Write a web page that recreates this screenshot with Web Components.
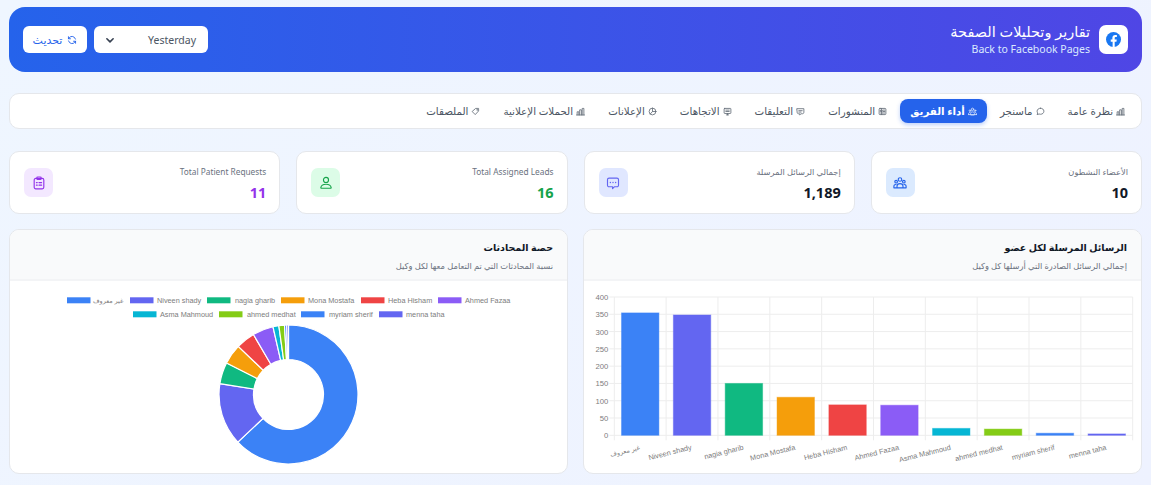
<!DOCTYPE html>
<html lang="ar" dir="rtl">
<head>
<meta charset="utf-8">
<title>تقارير وتحليلات الصفحة</title>
<style>
html,body{margin:0;padding:0}
body{min-height:485px;background:linear-gradient(135deg,#eff6ff,#eef2ff);font-family:"Noto Sans","DejaVu Sans",sans-serif;color:#111827}
report-page{display:block}
</style>
</head>
<body>
<report-page>
  <page-header slot="header" title-text="تقارير وتحليلات الصفحة" sub="Back to Facebook Pages"></page-header>
  <tab-bar>
    <tab-item icon="bars">نظرة عامة</tab-item>
    <tab-item icon="bubble">ماسنجر</tab-item>
    <tab-item icon="team" active>أداء الفريق</tab-item>
    <tab-item icon="news">المنشورات</tab-item>
    <tab-item icon="shieldchat">التعليقات</tab-item>
    <tab-item icon="trend">الاتجاهات</tab-item>
    <tab-item icon="pie">الإعلانات</tab-item>
    <tab-item icon="bars">الحملات الإعلانية</tab-item>
    <tab-item icon="tag">الملصقات</tab-item>
  </tab-bar>
  <stat-row>
    <stat-card label="الأعضاء النشطون" value="10" icon="team" tile="#dbeafe" tint="#2563eb"></stat-card>
    <stat-card label="إجمالي الرسائل المرسلة" value="1,189" icon="chat" tile="#e0e7ff" tint="#6366f1"></stat-card>
    <stat-card label="Total Assigned Leads" value="16" icon="user" tile="#dcfce7" tint="#16a34a" color="#16a34a"></stat-card>
    <stat-card label="Total Patient Requests" value="11" icon="clip" tile="#f3e8ff" tint="#9333ea" color="#9333ea"></stat-card>
  </stat-row>
  <chart-row>
    <chart-panel title-text="الرسائل المرسلة لكل عضو" sub="إجمالي الرسائل الصادرة التي أرسلها كل وكيل"><bar-chart></bar-chart></chart-panel>
    <chart-panel title-text="حصة المحادثات" sub="نسبة المحادثات التي تم التعامل معها لكل وكيل"><donut-chart></donut-chart></chart-panel>
  </chart-row>
</report-page>
<script>
const ICONS={
 bars:'<path d="M2 14V8.500h3V14M6.500 14V5h3v9M11 14V2.500h3V14M1 14.200h14"/>',
 bubble:'<path d="M8 2.200c3.600 0 6 2.300 6 5.300s-2.400 5.400-6 5.400c-.9 0-1.800-.2-2.600-.5L2 13.600l1-2.900C2.300 9.700 2 8.700 2 7.500c0-3 2.400-5.300 6-5.300z"/>',
 team:'<circle cx="8" cy="4" r="2"/><circle cx="3.600" cy="6.500" r="1.500"/><circle cx="12.400" cy="6.500" r="1.500"/><path d="M1 13.500v-1.600c0-1.300 1-2.200 2.400-2.200M15 13.500v-1.600c0-1.300-1-2.200-2.400-2.200M4.600 13.500v-2c0-1.500 1.400-2.800 3.400-2.800s3.400 1.300 3.400 2.800v2zM1 13.500h14"/>',
 news:'<rect x="2" y="2.500" width="12" height="11" rx="1.500"/><path d="M5 5.500h2.500v2.500H5zM9.500 5.500H12M9.500 8H12M4.500 10.700H12M6.500 2.500v11"/>',
 shieldchat:'<path d="M2 3h12v6.500c0 1.500-1.200 2.500-2.500 2.500H9l-2.500 2v-2H4.500C3 12 2 11 2 9.500z"/><path d="M5 6.500h6M5 9h4"/>',
 trend:'<rect x="2" y="2.500" width="12" height="9" rx="1"/><path d="M5 5.500h6M5 8h6M6 14h4M8 11.500V14"/>',
 pie:'<circle cx="8" cy="8" r="6"/><path d="M8 2v6h6"/><path d="M8 8l-4 4.400"/>',
 tag:'<path d="M9 2.500h4.500V7L7.500 13.500 2.500 8.500z"/><circle cx="10.800" cy="5.200" r=".4"/>',
 chat:'<path d="M3.500 2.500h9A1.800 1.800 0 0 1 14.300 4.300v6.200a1.800 1.800 0 0 1-1.800 1.800H9.500L7.500 14.500v-2.200h-4A1.800 1.800 0 0 1 1.700 10.500V4.300A1.800 1.800 0 0 1 3.500 2.500z"/><path d="M5 7.400h.01M8 7.400h.01M11 7.400h.01" stroke-width="1.600"/>',
 user:'<circle cx="8" cy="4.500" r="2.900"/><path d="M2.800 14c-.4 0-.8-.3-.7-.8C2.500 10.600 5 9.400 8 9.400s5.500 1.200 5.900 3.800c.1.500-.3.800-.7.800z"/>',
 clip:'<rect x="2.500" y="2.700" width="11" height="12" rx="1.800"/><rect x="5.500" y="1.200" width="5" height="2.800" rx="1"/><path d="M5 7.500h1M8 7.500h3M5 10.500h1M8 10.500h3"/>',
 refresh:'<path d="M13.500 6.500A5.700 5.700 0 0 0 3.500 4.500L2.300 6M2.500 9.500a5.700 5.700 0 0 0 10 2L13.700 10"/><path d="M2.300 2.800V6h3.200M13.700 13.200V10h-3.200"/>',
 chevron:'<path d="M3 6l5 5 5-5"/>'
};
class UiIcon extends HTMLElement{
  connectedCallback(){
    const s=this.getAttribute('size')||'10', w=this.getAttribute('weight')||'1.500';
    this.attachShadow({mode:'open'}).innerHTML=`<style>:host{display:inline-flex;flex:none;width:${s}px;height:${s}px}svg{width:100%;height:100%;display:block}</style>
    <svg viewBox="0 0 16 16" fill="none" stroke="currentColor" stroke-width="${w}" stroke-linecap="round" stroke-linejoin="round">${ICONS[this.getAttribute('name')]||''}</svg>`;
  }
}
customElements.define('ui-icon',UiIcon);

class ReportPage extends HTMLElement{
  constructor(){super();this.attachShadow({mode:'open'}).innerHTML=`<style>:host{display:flex;flex-direction:column;padding:7px 9px 0}
  .h{margin-bottom:21px}</style><div class="h"><slot name="header"></slot></div><slot></slot>`;}
}
customElements.define('report-page',ReportPage);

class PageHeader extends HTMLElement{
  connectedCallback(){
    this.attachShadow({mode:'open'}).innerHTML=`<style>
    :host{display:flex;align-items:center;justify-content:space-between;height:65px;box-sizing:border-box;padding:0 14px;border-radius:16px;background:linear-gradient(90deg,#2563eb,#4f46e5);color:#fff}
    .brand{display:flex;align-items:center;gap:9px}
    .tile{width:29px;height:29px;border-radius:7px;background:#fff;display:flex;align-items:center;justify-content:center}
    .t{font-size:14.500px;font-weight:500;line-height:19px}
    .s{font-size:10.500px;line-height:15px;margin-top:1px;color:#dbeafe;text-align:right;direction:ltr}
    .tools{display:flex;gap:7px;direction:ltr}
    .sel,.btn{height:27px;background:#fff;border-radius:6px;display:flex;align-items:center;font-size:11px;box-sizing:border-box}
    .sel{width:114px;padding:0 12px 0 11px;justify-content:space-between;color:#4b5563;font-size:10.500px}
    .sel ui-icon{color:#374151}
    .btn{width:64px;justify-content:center;gap:5px;color:#2563eb}
    </style>
    <div class="brand"><div class="tile"><svg width="15" height="15" viewBox="0 0 24 24"><circle cx="12" cy="12" r="12" fill="#1877f2"/><path fill="#fff" d="M16.700 15.500l.5-3.500h-3.300V9.800c0-1 .5-1.900 2-1.900h1.500v-3s-1.400-.2-2.700-.2c-2.700 0-4.500 1.600-4.500 4.600V12H7.600v3.500h3v8.400a12 12 0 0 0 3.300 0v-8.400z"/></svg></div>
    <div><div class="t">${this.getAttribute('title-text')}</div><div class="s">${this.getAttribute('sub')}</div></div></div>
    <div class="tools"><div class="btn"><span>تحديث</span><ui-icon name="refresh" size="10"></ui-icon></div>
    <div class="sel"><ui-icon name="chevron" size="10" weight="2.600"></ui-icon><span>Yesterday</span></div></div>`;
  }
}
customElements.define('page-header',PageHeader);

class TabBar extends HTMLElement{
  constructor(){super();this.attachShadow({mode:'open'}).innerHTML=`<style>:host{display:flex;gap:2px;height:36px;box-sizing:border-box;padding:5px 5.500px;margin-bottom:22px;background:#fff;border:1px solid #e5e7eb;border-radius:10px;align-items:stretch}</style><slot></slot>`;}
}
customElements.define('tab-bar',TabBar);
class TabItem extends HTMLElement{
  connectedCallback(){
    const a=this.hasAttribute('active');
    this.attachShadow({mode:'open'}).innerHTML=`<style>
    :host{display:flex;align-items:center;gap:3px;padding:0 10.500px;border-radius:8px;font-size:10.300px;font-weight:${a?600:500};white-space:nowrap;color:${a?'#fff':'#4b5563'};background:${a?'#2563eb':'transparent'};${a?'box-shadow:0 2px 4px rgba(37,99,235,.3);':''}}
    ui-icon{opacity:${a?.8:.85}}
    </style><ui-icon name="${this.getAttribute('icon')}" size="9"></ui-icon><slot></slot>`;
  }
}
customElements.define('tab-item',TabItem);

class StatRow extends HTMLElement{
  constructor(){super();this.attachShadow({mode:'open'}).innerHTML=`<style>:host{display:grid;grid-template-columns:repeat(4,1fr);gap:16px;margin-bottom:15px}</style><slot></slot>`;}
}
customElements.define('stat-row',StatRow);
class StatCard extends HTMLElement{
  connectedCallback(){
    const g=n=>this.getAttribute(n);
    this.attachShadow({mode:'open'}).innerHTML=`<style>
    :host{display:flex;align-items:center;justify-content:space-between;height:63px;box-sizing:border-box;padding:0 13px 0 14px;background:#fff;border:1px solid #e5e7eb;border-radius:10px}
    .l{font-size:8.300px;line-height:13px;color:#6b7280;margin-bottom:5px}
    .v{font-size:14.500px;line-height:18px;font-weight:700;color:${g('color')||'#111827'};direction:ltr;text-align:right}
    .tile{width:29px;height:29px;border-radius:7px;background:${g('tile')};color:${g('tint')};display:flex;align-items:center;justify-content:center}
    </style><div><div class="l">${g('label')}</div><div class="v">${g('value')}</div></div>
    <div class="tile"><ui-icon name="${g('icon')}" size="14" weight="1.300"></ui-icon></div>`;
  }
}
customElements.define('stat-card',StatCard);

class ChartRow extends HTMLElement{
  constructor(){super();this.attachShadow({mode:'open'}).innerHTML=`<style>:host{display:grid;grid-template-columns:1fr 1fr;gap:15px}</style><slot></slot>`;}
}
customElements.define('chart-row',ChartRow);
class ChartPanel extends HTMLElement{
  connectedCallback(){
    this.attachShadow({mode:'open'}).innerHTML=`<style>
    :host{display:block;height:245px;box-sizing:border-box;background:#fff;border:1px solid #e5e7eb;border-radius:10px;overflow:hidden}
    header{height:51px;box-sizing:border-box;padding:10px 14px 0;background:#f9fafb;border-bottom:2px solid #f3f4f6}
    .t{font-size:9.500px;line-height:16px;font-weight:700;color:#111827}
    .s{font-size:8.300px;line-height:13px;color:#6b7280;margin-top:3px}
    </style><header><div class="t">${this.getAttribute('title-text')}</div><div class="s">${this.getAttribute('sub')}</div></header><slot></slot>`;
  }
}
customElements.define('chart-panel',ChartPanel);

const COLORS=['#3b82f6','#6366f1','#10b981','#f59e0b','#ef4444','#8b5cf6','#06b6d4','#84cc16','#3b82f6','#6366f1'];
const NAMES=['غير معروف','Niveen shady','nagia gharib','Mona Mostafa','Heba Hisham','Ahmed Fazaa','Asma Mahmoud','ahmed medhat','myriam sherif','menna taha'];
const CHART_CSS=`:host{display:block}svg{display:block;width:100%;height:192px}text{font-family:"Liberation Sans","DejaVu Sans",sans-serif;font-size:7.300px;fill:#7d7d7d}`;

class BarChart extends HTMLElement{
  connectedCallback(){
    const vals=[354,348,150,110,88,87,20,18,6,4];
    const x0=614.3,x1=1132.7,y0=435.3,y4=297,step=(x1-x0)/10,ys=(y0-y4)/8;
    let g='';
    for(let i=0;i<=10;i++){const x=x0+i*step;g+=`<line x1="${x}" x2="${x}" y1="${y4}" y2="${y0+5}" stroke="#ededed" stroke-width="1"/>`;}
    for(let i=0;i<=8;i++){const y=y0-i*ys;g+=`<line x1="${x0-5}" x2="${x1}" y1="${y}" y2="${y}" stroke="#ededed" stroke-width="1"/>`;
      g+=`<text x="${x0-6}" y="${y+3}" text-anchor="end" style="direction:ltr;font-size:7.700px">${i*50}</text>`;}
    vals.forEach((v,i)=>{const c=x0+step*(i+.5),h=v/400*(y0-y4);
      g+=`<rect x="${c-18.700}" y="${y0-h}" width="37.400" height="${h}" fill="${COLORS[i]}" stroke="${COLORS[i]}" stroke-opacity=".45" stroke-width="1"/>`;
      g+=`<text transform="translate(${c} 449.500) rotate(-14)" text-anchor="end" style="direction:ltr${i==0?';font-size:6.400px':''}">${NAMES[i]}</text>`;});
    this.attachShadow({mode:'open'}).innerHTML=`<style>${CHART_CSS}</style><svg viewBox="584 281 557 192" dir="ltr">${g}</svg>`;
  }
}
customElements.define('bar-chart',BarChart);

class DonutChart extends HTMLElement{
  connectedCallback(){
    const cx=288.500,cy=394.500,R=69.500,r=35;
    const stops=[0,226.800,279,297,313.800,329.700,347.100,352,356.700,358.500,360];
    const p=(a,rad)=>{const t=(a-90)*Math.PI/180;return `${(cx+rad*Math.cos(t)).toFixed(2)} ${(cy+rad*Math.sin(t)).toFixed(2)}`;};
    let g='';
    for(let i=0;i<10;i++){const a=stops[i],b=stops[i+1],l=b-a>180?1:0;
      g+=`<path d="M${p(a,R)}A${R} ${R} 0 ${l} 1 ${p(b,R)}L${p(b,r)}A${r} ${r} 0 ${l} 0 ${p(a,r)}Z" fill="${COLORS[i]}" stroke="#fff" stroke-width="1.200"/>`;}
    const leg=[[67,93,300],[130,157,300],[207,235,300],[281,308,300],[361,388,300],[438,465,300],[133,160,314],[219,247,314],[301,329,314],[379,406,314]];
    leg.forEach((o,i)=>{g+=`<rect x="${o[0]}" y="${o[2]-2.700}" width="23.500" height="6" fill="${COLORS[i]}"/>`;
      g+=`<text x="${o[1]}" y="${o[2]+3}" text-anchor="start" style="direction:ltr${i==0?';font-size:6.400px':''}">${NAMES[i]}</text>`;});
    this.attachShadow({mode:'open'}).innerHTML=`<style>${CHART_CSS}</style><svg viewBox="10 281 557 192" dir="ltr">${g}</svg>`;
  }
}
customElements.define('donut-chart',DonutChart);
</script>
</body>
</html>
